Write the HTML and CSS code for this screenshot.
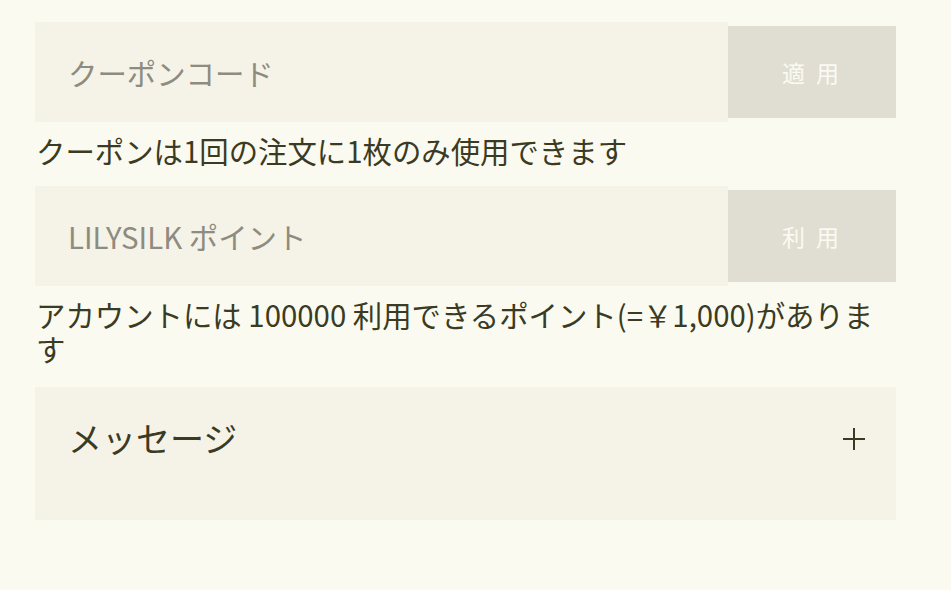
FILE: index.html
```html
<!DOCTYPE html>
<html lang="ja">
<head>
  <meta charset="UTF-8" />
  <meta name="viewport" content="width=device-width, initial-scale=1.0"/>
  <title>クーポン</title>
  <link rel="stylesheet" href="styles.css">
</head>
<body>

<main class="checkout">

  <div class="field-row">
    <input type="text" class="field-input" placeholder="クーポンコード" />
    <button class="field-btn">適 用</button>
  </div>
  <p class="hint">クーポンは1回の注文に1枚のみ使用できます</p>

  <div class="field-row">
    <input type="text" class="field-input" placeholder="LILYSILK ポイント" />
    <button class="field-btn">利 用</button>
  </div>
  <p class="hint">アカウントには 100000 利用できるポイント(=￥1,000)があります</p>

  <section class="message-box">
    <span class="message-title">メッセージ</span>
    <svg class="message-toggle" width="24" height="24" viewBox="0 0 24 24">
      <path d="M12 1v22M1 12h22" stroke="#3b3a22" stroke-width="2" fill="none"/>
    </svg>
  </section>

</main>

</body>
</html>
```

FILE: styles.css
```css
body {
  font-family: "Noto Sans CJK JP", "Noto Sans", sans-serif;
  background: #fafaf0;
  color: #3b3a22;
  margin: 0;
  padding: 0;
}
.checkout {
  width: 861px;
  margin-left: 35px;
  padding-top: 22px;
}
.field-row {
  display: flex;
  align-items: center;
}
.field-input {
  flex: 1;
  height: 100px;
  box-sizing: border-box;
  border: none;
  outline: none;
  background: #f5f3e7;
  padding: 0 33px;
  font-family: inherit;
  font-size: 29.4px;
  color: #3b3a22;
}
.field-input::placeholder {
  color: #8e8b80;
}
.field-btn {
  width: 168px;
  height: 92px;
  border: none;
  background: #e0ded3;
  color: #fbfaf2;
  font-family: inherit;
  font-size: 23px;
  letter-spacing: 3px;
  cursor: pointer;
}
.hint {
  margin: 0;
  padding: 11px 0 19px 1px;
  font-size: 29.4px;
  line-height: 34px;
}
.message-box {
  margin-top: 3px;
  height: 133px;
  background: #f5f3e7;
  display: flex;
  justify-content: space-between;
  align-items: flex-start;
  padding: 31px 30px 0 33px;
  box-sizing: border-box;
}
.message-title {
  font-size: 34px;
  line-height: 40px;
}
.message-toggle {
  margin-top: 9px;
}
```
